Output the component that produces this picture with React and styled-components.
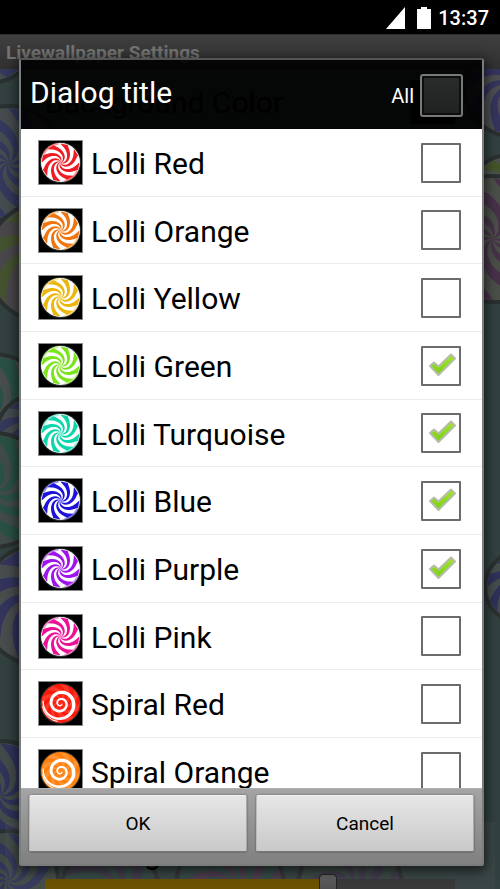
import { useState } from "react";
import styled, { createGlobalStyle } from "styled-components";

const GlobalStyle = createGlobalStyle`
  * {
    box-sizing: border-box;
  }

  body {
    margin: 0;
    background: #000;
    font-family: Roboto, "Noto Sans", sans-serif;
  }
`;

const Screen = styled.div`
  position: relative;
  display: flex;
  flex-direction: column;
  height: 100vh;
  overflow: hidden;
`;

const StatusBar = styled.header`
  display: flex;
  flex: none;
  align-items: center;
  justify-content: flex-end;
  height: 34px;
  padding: 2px 11px 0;
  background: #000;
  color: #fff;
  font-size: 20px;
  font-weight: 500;

  svg {
    margin-right: 6px;
  }
`;

const Backdrop = styled.div`
  position: absolute;
  inset: 34px 0 0;
  display: flex;
  flex-direction: column;
`;

const TitleBar = styled.div`
  flex: none;
  height: 35px;
  padding: 8px 6px 0;
  border-top: 1px solid #2c2c2c;
  background: linear-gradient(#3f3f3f, #303030);
  color: #737373;
  font-size: 19px;
  line-height: 20px;
  font-weight: 700;
`;

const Settings = styled.div`
  position: relative;
  display: flex;
  flex: 1;
  flex-direction: column;
  justify-content: space-between;
  min-height: 0;
`;

const WallpaperSvg = styled.svg`
  position: absolute;
  inset: 0;
  width: 100%;
  height: 100%;
`;

const Preference = styled.div`
  position: relative;
  display: flex;
  align-items: center;
  justify-content: space-between;
  height: 66px;
  padding: 0 45px;
  color: #000;
  font-size: 30px;
`;

const Swatch = styled.span`
  width: 44px;
  height: 44px;
  background: #000;
`;

const SliderPreference = styled.label`
  position: relative;
  display: flex;
  flex-direction: column;
  height: 67px;
  margin: 0 5px;
  padding: 16px 40px 0;
  background: rgba(110, 110, 110, 0.15);
  color: #000;
  font-size: 30px;
  line-height: 32px;
`;

const Slider = styled.input`
  appearance: none;
  flex: none;
  width: 100%;
  height: 24px;
  margin: 4px 0 0;
  border-radius: 4px;
  background: linear-gradient(90deg, #6b5300 69%, #393939 69%) 0 5px / 100% 19px no-repeat;

  &::-webkit-slider-thumb {
    appearance: none;
    width: 18px;
    height: 24px;
    border: 1px solid #242424;
    border-radius: 4px;
    background: linear-gradient(#626262, #444);
  }
`;

const Dialog = styled.section`
  position: relative;
  display: flex;
  flex: 1;
  flex-direction: column;
  min-height: 0;
  margin: 24px 16px 23px 19px;
  border: 2px solid #7c7c7c;
  border-top-color: #555;
  border-radius: 3px;
  box-shadow: 0 3px 12px 2px rgba(0, 0, 0, 0.6);
`;

const DialogHeader = styled.div`
  display: flex;
  flex: none;
  align-items: center;
  justify-content: space-between;
  height: 69px;
  padding: 0 19px 0 9px;
  background: rgba(0, 0, 0, 0.9);
  color: #fff;
`;

const Title = styled.h1`
  margin: 0;
  padding-bottom: 4px;
  font-size: 30px;
  line-height: 36px;
  font-weight: 400;
`;

const AllLabel = styled.label`
  display: flex;
  align-items: center;
  gap: 6px;
  padding-top: 2px;
  font-size: 20px;
`;

const AllBox = styled.input`
  appearance: none;
  width: 43px;
  height: 43px;
  margin: 0;
  border: 2px solid #787878;
  border-radius: 3px;
  background: ${({ checked }) => (checked ? "#4f7d22" : "linear-gradient(#2a2c2c, #202221)")};
  box-shadow: inset 0 0 0 2px #0c0d0d;
`;

const List = styled.ul`
  flex: 1;
  min-height: 0;
  margin: 0;
  padding: 0;
  overflow: hidden;
  background: #fff;
  list-style: none;
`;

const Row = styled.li`
  height: 68px;
  border-bottom: 1px solid #ececec;

  &:nth-child(3n + 2) {
    height: 67px;
  }
`;

const RowLabel = styled.label`
  display: flex;
  align-items: center;
  gap: 8px;
  height: 100%;
  padding: 0 21px 0 17px;
  color: #000;
  font-size: 30px;
`;

const RowText = styled.span`
  flex: 1;
  padding-top: 2px;
`;

const CandySvg = styled.svg`
  flex: none;
  width: 45px;
  height: 45px;
`;

const CheckHolder = styled.span`
  display: grid;
  width: 40px;
  height: 40px;

  > * {
    grid-area: 1 / 1;
  }

  svg {
    pointer-events: none;
  }
`;

const CheckBox = styled.input`
  appearance: none;
  width: 40px;
  height: 40px;
  margin: 0;
  border: 2px solid #6b6b6b;
  border-radius: 1px;
  background: #fff;
`;

const Footer = styled.div`
  display: grid;
  flex: none;
  grid-template-columns: 1fr 1fr;
  gap: 9px;
  height: 76px;
  padding: 6px 8px 12px;
  border-top: 1px solid #b0b0b0;
  background: linear-gradient(#a4a4a4, #808080);
`;

const Button = styled.button`
  padding: 0;
  border: 1px solid;
  border-color: #f2f2f2 #aaa #777 #bbb;
  border-radius: 2px;
  background: linear-gradient(#e6e6e6, #c9c9c9);
  box-shadow: 0 0 2px rgba(0, 0, 0, 0.5);
  color: #000;
  font-family: inherit;
  font-size: 19px;
`;

const polar = (r, a) => `${(r * Math.cos(a)).toFixed(2)} ${(r * Math.sin(a)).toFixed(2)}`;

// curved wedges that run from the middle to the edge
const swirlPath = (radius, arms, twist = 1.7) => {
  const step = (Math.PI * 2) / arms;
  const steps = 14;
  let d = "";
  for (let i = 0; i < arms; i++) {
    const edge = (offset) =>
      Array.from({ length: steps + 1 }, (_, n) => {
        const t = n / steps;
        return polar(radius * t, i * step + offset + twist * Math.pow(1 - t, 1.3));
      });
    const points = [...edge(0), ...edge(step / 2).reverse()];
    d += `M${points.join("L")}Z`;
  }
  return d;
};

// a band that gets wider as it winds outwards
const spiralPath = () => {
  const outer = [];
  const inner = [];
  const total = Math.PI * 5;
  for (let n = 0; n <= 110; n++) {
    const t = n / 110;
    const a = 3.3 - total * (1 - t);
    const r = 1.5 + 16 * Math.pow(t, 1.35);
    const half = 0.6 + 1.5 * t * (t > 0.8 ? (1 - t) / 0.2 : 1);
    outer.push(polar(r + half, a));
    inner.push(polar(Math.max(r - half, 0), a));
  }
  return `M${[...outer, ...inner.reverse()].join("L")}Z`;
};

const CANDY_SWIRL = swirlPath(19, 8, 1.9);
const CANDY_SPIRAL = spiralPath();

const Candy = ({ kind, color, light }) => (
  <CandySvg viewBox="-22.5 -22.5 45 45" aria-hidden="true">
    <rect x="-22" y="-22" width="44" height="44" fill="#000" stroke="#8a8a8a" />
    <circle r="20.5" fill="#26302f" />
    {kind === "lolli" ? (
      <>
        <circle r="19.5" fill="#fff" />
        <path d={CANDY_SWIRL} fill={color} />
        <path
          d="M-17 -8A19 19 0 0 1 -2 -18.7M17 8A19 19 0 0 1 4 18.4"
          fill="none"
          stroke={light}
          strokeWidth="2"
          opacity="0.6"
        />
      </>
    ) : (
      <>
        <circle r="19.5" fill={color} />
        <path d={CANDY_SWIRL} fill={light} opacity="0.4" />
        <path d={CANDY_SPIRAL} fill="#fff" />
        <path d="M-18 3A18.300 18.300 0 0 0 -3 18" fill="none" stroke="#fff" strokeWidth="1" />
      </>
    )}
  </CandySvg>
);

const Tick = () => (
  <svg viewBox="0 0 40 40" width="40" height="40" aria-hidden="true">
    <defs>
      <linearGradient id="tick" x1="0" y1="0" x2="0" y2="1">
        <stop offset="0" stopColor="#a4e62a" />
        <stop offset="1" stopColor="#78d010" />
      </linearGradient>
    </defs>
    <path
      d="M9 20L13 16.500L17.500 20.500L30 8.500L34 12.500L17.500 29Z"
      fill="url(#tick)"
      stroke="#b5bda9"
      strokeWidth="2"
      strokeLinejoin="round"
    />
  </svg>
);

const DISCS = [
  { x: -12, y: -38, r: 52, a: "#33385c", b: "#454a4d" },
  { x: 2, y: 165, r: 53, a: "#453250", b: "#4b4f50" },
  { x: 8, y: 94, r: 57, a: "#33385c", b: "#454b4e" },
  { x: 46, y: 193, r: 60, a: "#44522f", b: "#4a474c" },
  { x: -8, y: 347, r: 62, a: "#295044", b: "#464d4c" },
  { x: 36, y: 366, r: 40, a: "#33385c", b: "#454b4e" },
  { x: -6, y: 421, r: 57, a: "#295044", b: "#404b49" },
  { x: 40, y: 510, r: 30, a: "#44522f", b: "#44522f" },
  { x: 40, y: 536, r: 60, a: "#33345c", b: "#484c4d" },
  { x: 0, y: 726, r: 54, a: "#30335a", b: "#444a4a" },
  { x: 8, y: 812, r: 50, a: "#30335a", b: "#3f4844" },
  { x: 110, y: 825, r: 50, a: "#2d4541", b: "#3b3448" },
  { x: 230, y: 818, r: 54, a: "#2d4541", b: "#463548" },
  { x: 350, y: 818, r: 52, a: "#354540", b: "#3b3448" },
  { x: 512, y: 20, r: 47, a: "#34345d", b: "#4c4d50" },
  { x: 510, y: 130, r: 44, a: "#44552c", b: "#4c514f" },
  { x: 493, y: 170, r: 63, a: "#463149", b: "#4a4f48" },
  { x: 521, y: 518, r: 36, a: "#2f3159", b: "#464c4b" },
];

const Wallpaper = () => (
  <WallpaperSvg viewBox="0 0 500 820" preserveAspectRatio="xMidYMin slice" aria-hidden="true">
    <rect width="500" height="820" fill="#324040" />
    {DISCS.map(({ x, y, r, a, b }, i) => (
      <g key={i} transform={`translate(${x} ${y})`}>
        <circle r={r} fill={b} stroke="#2a3030" strokeWidth="4" />
        <path d={swirlPath(r - 2, 8)} fill={a} />
      </g>
    ))}
  </WallpaperSvg>
);

const ITEMS = [
  { name: "Lolli Red", kind: "lolli", color: "#ee1c25", light: "#ff5a4d" },
  { name: "Lolli Orange", kind: "lolli", color: "#f0750f", light: "#ffa347" },
  { name: "Lolli Yellow", kind: "lolli", color: "#ebb70c", light: "#f7d45a" },
  { name: "Lolli Green", kind: "lolli", color: "#7be51c", light: "#a6f05c" },
  { name: "Lolli Turquoise", kind: "lolli", color: "#0dd6ad", light: "#5ceccd" },
  { name: "Lolli Blue", kind: "lolli", color: "#1d12dc", light: "#5a52ee" },
  { name: "Lolli Purple", kind: "lolli", color: "#9f14ea", light: "#c05cf2" },
  { name: "Lolli Pink", kind: "lolli", color: "#ec1096", light: "#f25cb8" },
  { name: "Spiral Red", kind: "spiral", color: "#fa1a0c", light: "#ff6a5a" },
  { name: "Spiral Orange", kind: "spiral", color: "#ff7f0e", light: "#ffb264" },
];

const App = () => {
  const [selected, setSelected] = useState([
    "Lolli Green",
    "Lolli Turquoise",
    "Lolli Blue",
    "Lolli Purple",
  ]);

  const toggle = (name) => {
    setSelected((prev) =>
      prev.includes(name) ? prev.filter((n) => n !== name) : [...prev, name]
    );
  };

  const toggleAll = (e) => {
    setSelected(e.target.checked ? ITEMS.map((item) => item.name) : []);
  };

  return (
    <Screen>
      <GlobalStyle />
      <Backdrop>
        <TitleBar>Livewallpaper Settings</TitleBar>
        <Settings>
          <Wallpaper />
          <Preference>
            Background Color
            <Swatch />
          </Preference>
          <SliderPreference>
            Scrolling
            <Slider type="range" defaultValue={70} />
          </SliderPreference>
        </Settings>
      </Backdrop>
      <StatusBar>
        <svg width="46" height="22" viewBox="0 0 46 22" fill="#fff" aria-hidden="true">
          <path d="M0 22L19 0V22Z" />
          <path d="M35 0H41V2H45V22H31V2H35Z" />
        </svg>
        13:37
      </StatusBar>
      <Dialog role="dialog" aria-labelledby="dialog-title">
        <DialogHeader>
          <Title id="dialog-title">Dialog title</Title>
          <AllLabel>
            All
            <AllBox
              type="checkbox"
              checked={selected.length === ITEMS.length}
              onChange={toggleAll}
            />
          </AllLabel>
        </DialogHeader>
        <List>
          {ITEMS.map((item) => (
            <Row key={item.name}>
              <RowLabel>
                <Candy {...item} />
                <RowText>{item.name}</RowText>
                <CheckHolder>
                  <CheckBox
                    type="checkbox"
                    checked={selected.includes(item.name)}
                    onChange={() => toggle(item.name)}
                  />
                  {selected.includes(item.name) && <Tick />}
                </CheckHolder>
              </RowLabel>
            </Row>
          ))}
        </List>
        <Footer>
          <Button type="button">OK</Button>
          <Button type="button">Cancel</Button>
        </Footer>
      </Dialog>
    </Screen>
  );
};

export default App;
